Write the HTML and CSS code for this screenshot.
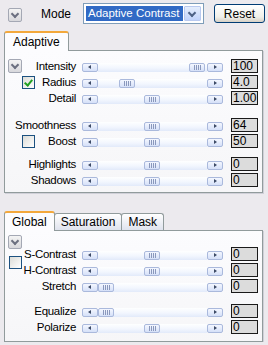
FILE: index.html
```html
<!doctype html>
<html>
	<head>
		<meta charset="utf-8">
		<title>Adaptive Contrast</title>
		<link rel="stylesheet" href="styles.css">
	</head>
	<body>

		<div class="topbar">
			<span class="fold"></span>
			<span class="mode-label">Mode</span>
			<div class="select">
				<span class="select-value">Adaptive Contrast</span>
				<span class="select-btn"></span>
			</div>
			<button class="reset">Reset</button>
		</div>

		<!-- first section -->
		<div class="tabs">
			<div class="tab active">Adaptive</div>
		</div>
		<div class="panel panel-one">
			<div class="rows">
				<div class="group">
					<div class="row">
						<div class="label"><span class="fold"></span>Intensity</div>
						<div class="scroll"><span class="sb-btn left"></span><div class="track"><span class="thumb" style="margin-left:91px"></span></div><span class="sb-btn right"></span></div>
						<div class="val">100</div>
					</div>
					<div class="row">
						<div class="label"><span class="check checked"></span>Radius</div>
						<div class="scroll"><span class="sb-btn left"></span><div class="track"><span class="thumb" style="margin-left:21px"></span></div><span class="sb-btn right"></span></div>
						<div class="val">4.0</div>
					</div>
					<div class="row">
						<div class="label">Detail</div>
						<div class="scroll"><span class="sb-btn left"></span><div class="track"><span class="thumb" style="margin-left:46px"></span></div><span class="sb-btn right"></span></div>
						<div class="val">1.00</div>
					</div>
				</div>
				<div class="group">
					<div class="row">
						<div class="label">Smoothness</div>
						<div class="scroll"><span class="sb-btn left"></span><div class="track"><span class="thumb" style="margin-left:46px"></span></div><span class="sb-btn right"></span></div>
						<div class="val">64</div>
					</div>
					<div class="row">
						<div class="label"><span class="check"></span>Boost</div>
						<div class="scroll"><span class="sb-btn left"></span><div class="track"><span class="thumb" style="margin-left:46px"></span></div><span class="sb-btn right"></span></div>
						<div class="val">50</div>
					</div>
				</div>
				<div class="group">
					<div class="row">
						<div class="label">Highlights</div>
						<div class="scroll"><span class="sb-btn left"></span><div class="track"><span class="thumb" style="margin-left:46px"></span></div><span class="sb-btn right"></span></div>
						<div class="val">0</div>
					</div>
					<div class="row">
						<div class="label">Shadows</div>
						<div class="scroll"><span class="sb-btn left"></span><div class="track"><span class="thumb" style="margin-left:46px"></span></div><span class="sb-btn right"></span></div>
						<div class="val">0</div>
					</div>
				</div>
			</div>
		</div>

		<!-- second section -->
		<div class="tabs tabs-two">
			<div class="tab active">Global</div>
			<div class="tab">Saturation</div>
			<div class="tab">Mask</div>
		</div>
		<div class="panel panel-two">
			<div class="side">
				<span class="fold"></span>
				<span class="check"></span>
			</div>
			<div class="rows">
				<div class="group">
					<div class="row">
						<div class="label">S-Contrast</div>
						<div class="scroll"><span class="sb-btn left"></span><div class="track"><span class="thumb" style="margin-left:46px"></span></div><span class="sb-btn right"></span></div>
						<div class="val">0</div>
					</div>
					<div class="row">
						<div class="label">H-Contrast</div>
						<div class="scroll"><span class="sb-btn left"></span><div class="track"><span class="thumb" style="margin-left:46px"></span></div><span class="sb-btn right"></span></div>
						<div class="val">0</div>
					</div>
					<div class="row">
						<div class="label">Stretch</div>
						<div class="scroll"><span class="sb-btn left"></span><div class="track"><span class="thumb" style="margin-left:0px"></span></div><span class="sb-btn right"></span></div>
						<div class="val">0</div>
					</div>
				</div>
				<div class="group">
					<div class="row">
						<div class="label">Equalize</div>
						<div class="scroll"><span class="sb-btn left"></span><div class="track"><span class="thumb" style="margin-left:0px"></span></div><span class="sb-btn right"></span></div>
						<div class="val">0</div>
					</div>
					<div class="row">
						<div class="label">Polarize</div>
						<div class="scroll"><span class="sb-btn left"></span><div class="track"><span class="thumb" style="margin-left:46px"></span></div><span class="sb-btn right"></span></div>
						<div class="val">0</div>
					</div>
				</div>
			</div>
		</div>

	</body>
</html>
```

FILE: styles.css
```css
html, body {
	margin: 0; padding: 0;
	font-family: "Liberation Sans", Arial, sans-serif;
	font-size: 11px;
	color: #000;
	background-color: #eceaee;
}

/* top bar */

.topbar {
	display: flex;
	align-items: center;
	height: 21px;
	padding: 3px 0 0 0;
}

.topbar > .fold {
	margin-left: 8px;
	margin-top: 2px;
}

.mode-label {
	margin-left: 19px;
	font-size: 12px;
	width: 42px;
}

.select {
	display: flex;
	box-sizing: border-box;
	width: 121px;
	height: 21px;
	padding: 2px;
	border: 1px solid #7f9db9;
	background-color: #fff;
}

.select-value {
	flex: 1;
	padding-left: 2px;
	line-height: 15px;
	font-size: 11.5px;
	white-space: nowrap;
	overflow: hidden;
	color: #fff;
	background-color: #316ac5;
}

.select-btn {
	position: relative;
	width: 15px;
	margin-left: 1px;
	border: 1px solid #b9c9ef;
	border-radius: 1px;
	background: linear-gradient(#e6eefc, #c1d3fb);
}

.select-btn::after {
	content: "";
	position: absolute;
	left: 4px; top: 3px;
	width: 4px; height: 4px;
	border-right: 2px solid #4d6185;
	border-bottom: 2px solid #4d6185;
	transform: rotate(45deg);
}

.reset {
	box-sizing: border-box;
	width: 51px;
	height: 19px;
	margin-left: 10px;
	padding: 0;
	font-family: inherit;
	font-size: 12px;
	border: 1px solid #003c74;
	border-radius: 3px;
	background: linear-gradient(#ffffff, #f0f0ea 70%, #d6d0c5);
}

/* fold and check boxes */

.fold {
	position: relative;
	display: inline-block;
	box-sizing: border-box;
	width: 14px;
	height: 14px;
	border: 1px solid #a4a8b4;
	border-radius: 2px;
	background: linear-gradient(#f4f4f4, #d8d8dc);
	flex: none;
}

.fold::after {
	content: "";
	position: absolute;
	left: 3px; top: 2px;
	width: 4px; height: 4px;
	border-right: 2px solid #6c7080;
	border-bottom: 2px solid #6c7080;
	transform: rotate(45deg);
}

.check {
	position: relative;
	display: inline-block;
	box-sizing: border-box;
	width: 13px;
	height: 13px;
	border: 1px solid #1c5180;
	background: linear-gradient(135deg, #dcdcd7, #ffffff);
	flex: none;
}

.check.checked::after {
	content: "";
	position: absolute;
	left: 3px; top: 1px;
	width: 3px; height: 6px;
	border-right: 2px solid #21a121;
	border-bottom: 2px solid #21a121;
	transform: rotate(40deg);
}

/* tabs */

.tabs {
	display: flex;
	margin: 7px 0 0 4px;
	height: 19px;
	align-items: flex-end;
}

.tabs-two {
	margin-top: 18px;
}

.tab {
	box-sizing: border-box;
	height: 17px;
	padding: 0 6px;
	line-height: 16px;
	font-size: 12px;
	border: 1px solid #919b9c;
	border-bottom: none;
	border-radius: 3px 3px 0 0;
	background: linear-gradient(#ffffff, #eceef4 60%, #dfe3ee);
	margin-right: -1px;
}

.tab.active {
	position: relative;
	height: 20px;
	margin-bottom: -1px;
	padding: 0 8px;
	line-height: 19px;
	background: #fcfcfe;
	border-top: 2px solid #f3a83b;
	z-index: 1;
}

.tabs-two .tab.active {
	padding: 0 7px;
}

/* panels */

.panel {
	box-sizing: border-box;
	width: 259px;
	margin-left: 4px;
	border: 1px solid #919b9c;
	background: linear-gradient(#fcfcfe, #f6f6f8);
	box-shadow: 1px 1px 0 #d0d0d8;
}

.panel-one {
	padding: 7px 0 4px 0;
}

.panel-two {
	display: flex;
	padding: 0 0 6px 0;
}

.side {
	display: flex;
	flex-direction: column;
	width: 18px;
	padding: 4px 0 0 3px;
	box-sizing: border-box;
	gap: 7px;
}

.side .check {
	margin-left: 1px;
}

.panel-two .rows {
	padding-top: 15px;
	--label-w: 54px;
}

.rows {
	--label-w: 72px;
}

.group + .group {
	margin-top: 11px;
}

.panel-one .group:last-child {
	margin-top: 7px;
}

.panel-two .group + .group {
	margin-top: 9px;
}

.row {
	display: grid;
	grid-template-columns: var(--label-w) 141px 30px;
	column-gap: 5px;
	align-items: center;
	height: 16px;
}

.label {
	display: flex;
	align-items: center;
	justify-content: flex-end;
	padding-right: 1px;
	font-size: 11.5px;
	letter-spacing: -0.3px;
	white-space: nowrap;
}

.label .fold {
	margin: 0 auto 0 3px;
}

.label .check {
	margin: 0 auto 0 17px;
}

/* scroll bars */

.scroll {
	display: flex;
	height: 9px;
	margin-top: 2px;
}

.track {
	flex: 1;
	display: flex;
	background: linear-gradient(#feffff, #f2f6fe 55%, #e2eafa);
}

.sb-btn, .thumb {
	position: relative;
	box-sizing: border-box;
	width: 16px;
	height: 9px;
	border: 1px solid #aab9dc;
	border-radius: 2px;
	background: linear-gradient(#f4f7ff, #d5e0f8);
	flex: none;
}

.sb-btn::after {
	content: "";
	position: absolute;
	top: 1px;
	left: 5px;
	border-top: 2.5px solid transparent;
	border-bottom: 2.5px solid transparent;
}

.sb-btn.left::after {
	border-right: 3px solid #3c4a66;
}

.sb-btn.right::after {
	left: 6px;
	border-left: 3px solid #3c4a66;
}

.thumb::after {
	content: "";
	position: absolute;
	left: 4px; top: 1px;
	width: 7px; height: 5px;
	background: repeating-linear-gradient(90deg, #8a98bc 0 1px, transparent 1px 2px);
}

/* values */

.val {
	box-sizing: border-box;
	height: 14px;
	margin-left: 3px;
	padding-left: 1px;
	line-height: 12px;
	font-size: 12px;
	white-space: nowrap;
	overflow: hidden;
	border: 1px solid #1a1a1a;
	background-color: #dcdcdc;
}
```
